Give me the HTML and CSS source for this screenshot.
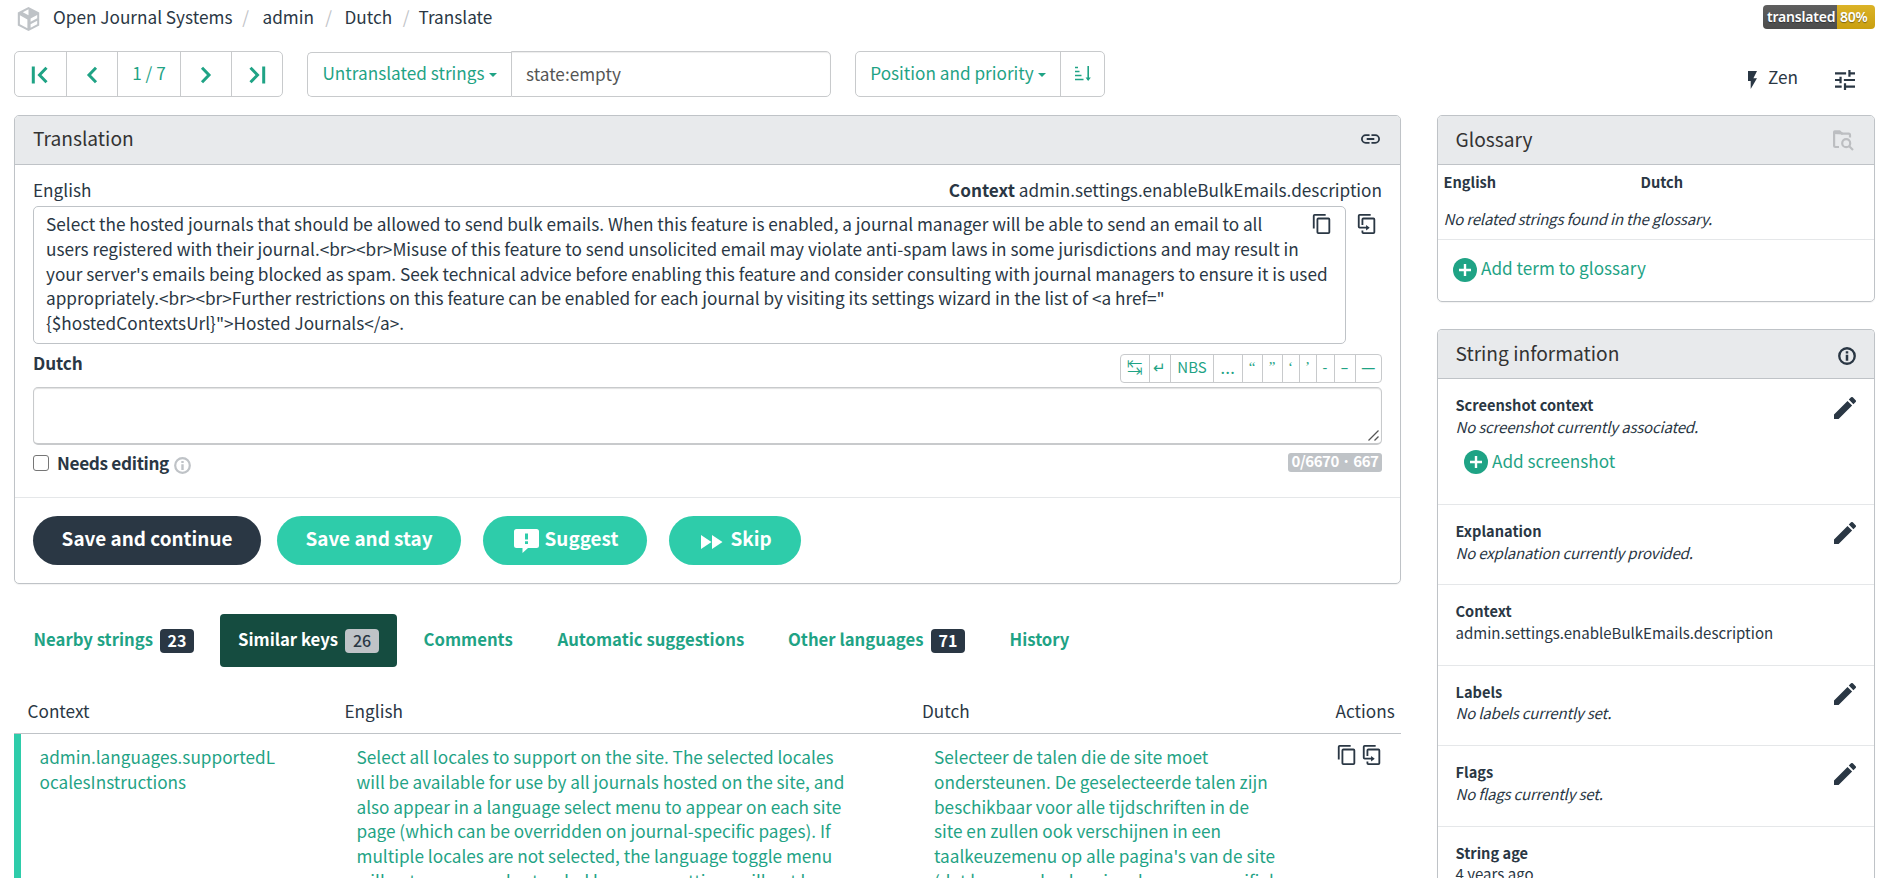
FILE: index.html
```
<!DOCTYPE html>
<html lang="en">
<head>
<meta charset="utf-8">
<title>Open Journal Systems — Dutch — Translate</title>
<link rel="stylesheet" href="styles.css">
</head>
<body>
<svg class="defs" aria-hidden="true">
  <symbol id="copy" viewBox="0 0 24 24"><path d="M19 21H8V7h11m0-2H8a2 2 0 0 0-2 2v14a2 2 0 0 0 2 2h11a2 2 0 0 0 2-2V7a2 2 0 0 0-2-2m-3-4H4a2 2 0 0 0-2 2v14h2V3h12V1z"/></symbol>
  <symbol id="clone" viewBox="0 0 24 24"><path d="M11 17H4a2 2 0 0 1-2-2V3a2 2 0 0 1 2-2h12v2H4v12h7v-2l4 3-4 3v-2m8 4V7H8v6H6V7a2 2 0 0 1 2-2h11a2 2 0 0 1 2 2v14a2 2 0 0 1-2 2H8a2 2 0 0 1-2-2v-2h2v2h11z"/></symbol>
  <symbol id="pencil" viewBox="3 3 18 18"><path d="M20.71 7.04a1 1 0 0 0 0-1.41l-2.34-2.34a1 1 0 0 0-1.41 0l-1.84 1.83 3.75 3.75M3 17.25V21h3.75L17.81 9.93l-3.75-3.75z"/></symbol>
  <symbol id="info" viewBox="0 0 20 20"><circle cx="10" cy="10" r="8.6" fill="none" stroke="currentColor" stroke-width="2.6"/><path d="M8.6 4.800h2.800v2.400H8.600zM8.600 8.600h2.800v6.600H8.600z"/></symbol>
  <symbol id="plus" viewBox="0 0 24 24"><circle cx="12" cy="12" r="12"/><path d="M12 6v12M6 12h12" stroke="#fff" stroke-width="2.4"/></symbol>
</svg>

<header class="top">
  <nav class="crumbs">
    <svg class="logo" viewBox="0 0 25 24"><path d="M12.500 0L23.200 5.400 23.200 18.400 12.500 24 1.800 18.400 1.800 5.400zM12.500 2.300L6.800 5.300 12.500 8.300zM3.900 8.300V17.200L11.400 21.200V12.400zM21.200 8.100L14.600 11.600V14.700L21.200 11.300zM21.200 13.800L14.600 17.200V20.700L21.200 17.200z" fill-rule="evenodd"/></svg>
    <a class="c1">Open Journal Systems</a><span class="sep">/</span>
    <a class="c2">admin</a><span class="sep">/</span>
    <a class="c3">Dutch</a><span class="sep">/</span>
    <a class="c4">Translate</a>
  </nav>
  <div class="status"><span class="status-label">translated</span><span class="status-value">80%</span></div>
</header>

<div class="toolbar">
  <div class="group pager">
    <a><svg width="18" height="18" viewBox="0 0 18 18" class="stroke"><path d="M2.300 .5v17M15.500 1.800L8.500 9l7 7.200"/></svg></a>
    <a><svg width="18" height="18" viewBox="0 0 18 18" class="stroke"><path d="M13 1.800L6 9l7 7.200"/></svg></a>
    <a class="count">1 / 7</a>
    <a><svg width="18" height="18" viewBox="0 0 18 18" class="stroke"><path d="M5 1.800L12 9l-7 7.200"/></svg></a>
    <a><svg width="18" height="18" viewBox="0 0 18 18" class="stroke"><path d="M2.500 1.800L9.500 9l-7 7.200M15.700 .5v17"/></svg></a>
  </div>
  <div class="search">
    <a class="filter">Untranslated strings<i class="caret"></i></a>
    <div class="query">state:empty</div>
  </div>
  <div class="group sort">
    <a class="sortby">Position and priority<i class="caret"></i></a>
    <a class="order"><svg width="16" height="16" viewBox="0 0 16 16"><path d="M0 1.500h3M0 5.500h4.500M0 9.500h6.500M0 13.500h8.500M13.200 0v14" stroke="currentColor" stroke-width="1.600"/><path d="M10.600 11.600h5.200L13.200 15z"/></svg></a>
  </div>
  <a class="zen"><svg width="9" height="18" viewBox="7 2 10 20" preserveAspectRatio="none"><path d="M7 2v11h3v9l7-12h-4l4-8z"/></svg>Zen</a>
  <svg class="tune" width="20" height="20" viewBox="3 3 18 18"><path d="M3 17v2h6v-2H3M3 5v2h10V5H3m10 16v-2h8v-2h-8v-2h-2v6h2M7 9v2H3v2h4v2h2V9H7m14 4v-2H11v2h10m-6-4h2V7h4V5h-4V3h-2v6z"/></svg>
</div>

<div class="columns">
  <main>
    <section class="card translation">
      <div class="card-head"><h4>Translation</h4>
        <svg class="link" width="19" height="10" viewBox="2 7 20 10"><path d="M3.900 12A3.100 3.100 0 0 1 7 8.900h4V7H7a5 5 0 0 0 0 10h4v-1.900H7A3.100 3.100 0 0 1 3.900 12M8 13h8v-2H8v2m9-6h-4v1.900h4a3.100 3.100 0 0 1 0 6.200h-4V17h4a5 5 0 0 0 0-10z"/></svg></div>
      <div class="card-body">
        <div class="labels"><span>English</span><span><b>Context</b> admin.settings.enableBulkEmails.description</span></div>
        <div class="source-row">
          <div class="source">
            <div>Select the hosted journals that should be allowed to send bulk emails. When this feature is enabled, a journal manager will be able to send an email to all<br>users registered with their journal.&lt;br&gt;&lt;br&gt;Misuse of this feature to send unsolicited email may violate anti-spam laws in some jurisdictions and may result in<br>your server's emails being blocked as spam. Seek technical advice before enabling this feature and consider consulting with journal managers to ensure it is used<br>appropriately.&lt;br&gt;&lt;br&gt;Further restrictions on this feature can be enabled for each journal by visiting its settings wizard in the list of &lt;a href="<br>{$hostedContextsUrl}"&gt;Hosted Journals&lt;/a&gt;.</div>
            <svg class="ico copy-in"><use href="#copy"/></svg>
          </div>
          <svg class="ico clone-out"><use href="#clone"/></svg>
        </div>
        <div class="target-row">
          <b>Dutch</b>
          <div class="chars">
            <a class="k1">↹</a><a class="k2">↵</a><a class="k3">NBS</a><a class="k4">…</a><a class="k5">“</a><a class="k6">”</a><a class="k7">‘</a><a class="k8">’</a><a class="k9">-</a><a class="k10">–</a><a class="k11">—</a>
          </div>
        </div>
        <div class="editor"><svg width="11" height="11" viewBox="0 0 11 11"><path d="M.5 10.500l10-10M6.500 10.500l4-4" stroke="#555" stroke-width="1.300"/></svg></div>
        <div class="flags-row">
          <span class="checkbox"></span><b>Needs editing</b>
          <svg class="hint"><use href="#info"/></svg>
          <span class="counter">0/6670 · 667</span>
        </div>
      </div>
      <div class="card-foot">
        <a class="btn dark b1">Save and continue</a>
        <a class="btn b2">Save and stay</a>
        <a class="btn b3"><svg width="25" height="24" viewBox="0 0 25 24"><path fill-rule="evenodd" d="M2.500 0h20A2.500 2.500 0 0 1 25 2.500v14a2.500 2.500 0 0 1-2.500 2.500H14l-5.500 5V19h-6A2.500 2.500 0 0 1 0 16.500v-14A2.500 2.500 0 0 1 2.500 0zM11 4.500h3v6h-3zM11 12.300h3v2.700h-3z"/></svg><span>Suggest</span></a>
        <a class="btn b4"><svg width="22" height="14" viewBox="0 0 22 14"><path d="M0 0l10.500 7L0 14zM11 0l10.500 7L11 14z"/></svg><span>Skip</span></a>
      </div>
    </section>

    <nav class="tabs">
      <a class="t1">Nearby strings<em>23</em></a>
      <a class="t2 active">Similar keys<em>26</em></a>
      <a class="t3">Comments</a>
      <a class="t4">Automatic suggestions</a>
      <a class="t5">Other languages<em>71</em></a>
      <a class="t6">History</a>
    </nav>

    <div class="table">
      <div class="tr th"><span>Context</span><span>English</span><span>Dutch</span><span>Actions</span></div>
      <div class="tr td">
        <div>admin.languages.supportedL<br>ocalesInstructions</div>
        <div>Select all locales to support on the site. The selected locales<br>will be available for use by all journals hosted on the site, and<br>also appear in a language select menu to appear on each site<br>page (which can be overridden on journal-specific pages). If<br>multiple locales are not selected, the language toggle menu<br>will not appear and extended language settings will not be</div>
        <div>Selecteer de talen die de site moet<br>ondersteunen. De geselecteerde talen zijn<br>beschikbaar voor alle tijdschriften in de<br>site en zullen ook verschijnen in een<br>taalkeuzemenu op alle pagina's van de site<br>(dat kan worden herzien door een specifiek</div>
        <div class="acts"><svg class="ico"><use href="#copy"/></svg><svg class="ico"><use href="#clone"/></svg></div>
      </div>
    </div>
  </main>

  <aside>
    <section class="card glossary">
      <div class="card-head"><h4>Glossary</h4>
        <svg class="folder" viewBox="0 0 21 21"><path d="M6 17H2.500a1.400 1.400 0 0 1-1.400-1.400V2M17 7.500V5a1.400 1.400 0 0 0-1.400-1.400H8"/><path d="M0 4V2A1.800 1.800 0 0 1 1.800.2H7l2.300 2.300H10V4.600z" fill="#bcbec1" stroke="none"/><circle cx="13.200" cy="13.200" r="4"/><path d="M16 16l4 4"/></svg></div>
      <div class="gl-head"><b>English</b><b>Dutch</b></div>
      <div class="gl-empty"><i>No related strings found in the glossary.</i></div>
      <div class="gl-foot"><a class="add"><svg><use href="#plus"/></svg>Add term to glossary</a></div>
    </section>

    <section class="card info">
      <div class="card-head"><h4>String information</h4><svg class="info-ico"><use href="#info"/></svg></div>
      <div class="item shot"><div><b>Screenshot context</b><i>No screenshot currently associated.</i><a class="add"><svg><use href="#plus"/></svg>Add screenshot</a></div><svg class="pen"><use href="#pencil"/></svg></div>
      <div class="item"><div><b>Explanation</b><i>No explanation currently provided.</i></div><svg class="pen"><use href="#pencil"/></svg></div>
      <div class="item"><div><b>Context</b><span>admin.settings.enableBulkEmails.description</span></div></div>
      <div class="item"><div><b>Labels</b><i>No labels currently set.</i></div><svg class="pen"><use href="#pencil"/></svg></div>
      <div class="item"><div><b>Flags</b><i>No flags currently set.</i></div><svg class="pen"><use href="#pencil"/></svg></div>
      <div class="item"><div><b>String age</b><span>4 years ago</span></div></div>
    </section>
  </aside>
</div>
</body>
</html>
```
FILE: styles.css
```
* { box-sizing: border-box; }
html, body { height: 878px; overflow: hidden; }
body {
  margin: 0;
  padding: 0 11px 0 14px;
  background: #fff;
  color: #2a3744;
  font: 17.19px/24.75px "Noto Sans CJK JP", "Noto Sans", sans-serif;
}
svg { display: block; flex: none; fill: currentColor; }
b { font-weight: bold; }
.defs { position: absolute; width: 0; height: 0; }
.stroke { fill: none; stroke: currentColor; stroke-width: 3; }
.ico { width: 22px; height: 22px; }

/* header */
.top { display: flex; justify-content: space-between; height: 51px; }
.crumbs { display: flex; padding: 5px 0 0 2px; }
.logo { width: 25px; height: 24px; margin: 2px 12px 0 0; color: #bfc3c7; }
.sep { color: #bfc3c7; width: 9px; text-align: center; }
.c1 { width: 188px; }
.c2 { padding-left: 12.500px; width: 74px; }
.c3 { padding-left: 11.500px; width: 68.500px; }
.c4 { padding-left: 8px; }
.status {
  display: flex; height: 24px; margin-top: 5px; border-radius: 4px; overflow: hidden;
  color: #fff; font: 600 14px/23px "Noto Sans", sans-serif;
  text-shadow: 0 1px 1px rgba(0, 0, 0, .4);
}
.status-label { width: 74px; padding-left: 4px; background: linear-gradient(#5f5f5f, #4c4c4c); letter-spacing: -0.2px; }
.status-value { width: 38px; padding-left: 3px; background: linear-gradient(#dcb327, #c99f10); letter-spacing: -0.3px; }

/* toolbar */
.toolbar { display: flex; height: 64px; }
.toolbar a { display: flex; align-items: center; justify-content: center; }
.group { display: flex; height: 46px; border: 1px solid #c8cacc; border-radius: 5px; color: #1fa385; }
.group a { padding-bottom: 1px; }
.group a + a { border-left: 1px solid #c8cacc; }
.pager { width: 269px; margin-right: 24px; }
.pager a { width: 51px; padding: 0; }
.pager a:first-child { padding-right: 2px; }
.pager svg { margin-top: 1px; }
.pager a.count { width: 63px; padding-bottom: 1px; }
.search { display: flex; margin-right: 24px; }
.search .filter {
  width: 204px; height: 45px; margin-top: 1px; padding-bottom: 2px; color: #1fa385;
  border: 1px solid #c8cacc; border-right: 0; border-radius: 5px 0 0 5px;
}
.query {
  width: 320px; height: 46px; padding: 10px 0 0 14px; color: #555;
  border: 1px solid #c8cacc; border-radius: 0 5px 5px 0;
  box-shadow: inset 0 1px 1px rgba(0, 0, 0, .075);
}
.caret { margin: 2px 0 0 4px; border: 4px solid transparent; border-top-color: currentColor; border-bottom: 0; }
.sort { width: 250px; }
.sort .sortby { width: 204px; }
.sort .order { flex: 1; padding: 0; }
.zen { margin-left: 643px; height: 53px; gap: 11px; }
.zen svg { margin-top: 4px; }
.tune { margin: 18.500px 0 0 37px; }

/* cards */
.columns { display: flex; gap: 36px; }
main { width: 1387px; }
aside { width: 438px; }
.card { border: 1px solid #bfc3c7; border-radius: 5px; box-shadow: 0 1px 1px rgba(0, 0, 0, .05); overflow: hidden; }
.card-head {
  display: flex; align-items: center; justify-content: space-between;
  height: 49px; background: #e8eaec; border-bottom: 1px solid #bfc3c7;
}
h4 { margin: 0; padding-bottom: 3px; color: #333; font-weight: normal; font-size: 19.2px; }
.translation { height: 469px; }
.translation .card-head { padding: 0 20px 0 18px; }
.link { margin-bottom: 2px; }
.card-body { height: 333px; padding: 13px 18px 0; border-bottom: 1px solid #e5e7e9; }
.labels { display: flex; justify-content: space-between; height: 28px; }
.source-row { display: flex; }
.source {
  display: flex; justify-content: space-between; width: 1313px; height: 138px; padding: 5px 13px 0 12px;
  border: 1px solid #bfc3c7; border-radius: 5px; white-space: nowrap;
}
.source > div { width: 1265px; }
.copy-in { margin: 1px 0 0; }
.clone-out { margin: 7px 0 0 10px; }
.target-row { display: flex; justify-content: space-between; height: 43px; padding-top: 7px; }
.target-row b { letter-spacing: -0.1px; }
.chars {
  display: flex; width: 262px; height: 29px; margin-top: 3px; color: #1fa385;
  border: 1px solid #c8cacc; border-radius: 4px; font-size: 15px; line-height: 24px;
}
.chars a { text-align: center; overflow: hidden; }
.chars a + a { border-left: 1px solid #c8cacc; }
.k1 { width: 27.500px; } .k2 { width: 21.500px; } .k3 { width: 43px; } .k4 { width: 28.500px; }
.k5 { width: 20px; } .k6 { width: 20px; } .k7 { width: 17px; } .k8 { width: 17px; }
.k9 { width: 18px; } .k10 { width: 21px; } .k11 { flex: 1; }
.k4 { font-family: "Open Sans", sans-serif; font-size: 19px; line-height: 24px; }
.k5, .k6, .k7, .k8 { font-family: "Liberation Serif", serif; line-height: 25px; }
.k9, .k10, .k11 { font-family: "Open Sans", sans-serif; line-height: 25px; }
.k11 { font-size: 14px; }
.editor {
  display: flex; align-items: flex-end; justify-content: flex-end; height: 58px; padding: 0 2px 2px 0;
  border: 1px solid #c8cacc; border-bottom-width: 2px; border-radius: 5px;
  box-shadow: inset 0 1px 1px rgba(0, 0, 0, .12);
}
.flags-row { display: flex; padding-top: 5px; }
.checkbox { width: 16px; height: 16px; margin: 5px 8px 0 0; border: 1px solid #767676; border-radius: 3px; }
.flags-row b { width: 117px; margin-top: 1px; letter-spacing: -0.33px; white-space: nowrap; }
.hint { width: 17px; height: 17px; margin-top: 7px; color: #bfc3c7; }
.counter {
  width: 94px; height: 19px; margin: 3px 0 0 auto; border-radius: 3px; background: #bfc3c7; color: #fff;
  font-size: 15px; font-weight: bold; line-height: 16px; letter-spacing: -0.45px; text-align: center; white-space: nowrap;
}
.card-foot { display: flex; padding: 18px 18px 0; }
.btn {
  display: flex; align-items: center; justify-content: center; height: 49px; padding-bottom: 4px;
  border-radius: 24.500px; background: #2eccaa; color: #fff; font-size: 18.900px; font-weight: bold; white-space: nowrap;
}
.dark { background: #2a3744; }
.b1 { width: 228px; }
.b2 { width: 184px; margin-left: 16px; }
.b3 { width: 164px; margin-left: 22px; padding-left: 2px; gap: 6px; }
.b4 { width: 132px; margin-left: 22px; padding-left: 3px; gap: 7px; }
.b3 svg { margin-top: 5px; }
.b4 svg { margin-top: 6px; }

/* tabs */
.tabs { display: flex; gap: 8px; height: 53px; margin: 30px 0 0 1.500px; }
.tabs a {
  display: flex; align-items: center; height: 53px; padding: 0 0 3px 18px; color: #1fa385;
  font-weight: bold; font-size: 16.730px; border-radius: 4px; white-space: nowrap;
}
.tabs em {
  width: 34px; height: 24px; margin: 4px 18px 0 auto; border-radius: 4px; background: #2a3744; color: #fff;
  font-style: normal; font-size: 16px; line-height: 23px; text-align: center;
}
.tabs .active { background: #154c40; color: #fff; }
.active em { background: #bfc3c7; color: #2a3744; font-weight: 500; }
.t1 { width: 196.500px; } .t2 { width: 177px; } .t3 { width: 126px; }
.t4 { width: 223px; } .t5 { width: 213px; } .t6 { width: 97px; }
.t3, .t4, .t6 { text-indent: .5px; }

/* table */
.table { margin-top: 31.500px; white-space: nowrap; }
.tr { display: grid; grid-template-columns: 317px 577.500px 413.500px 79px; }
.th { height: 35.500px; border-bottom: 1px solid #bfc3c7; }
.th span { padding-left: 13.500px; }
.td { height: 144px; padding-top: 11px; overflow: hidden; color: #1fa385; box-shadow: inset 7px 0 #2eccaa; }
.td div { padding-left: 25.500px; }
.td .acts { display: flex; gap: 3px; margin-top: -1px; padding-left: 14px; color: #2a3744; }

/* sidebar */
aside { font-size: 15.040px; line-height: 22px; }
aside b { font-size: 14.620px; }
aside i { letter-spacing: -0.2px; }
aside .card-head { padding: 0 20px 0 17.500px; }
.folder { width: 21px; height: 21px; fill: none; stroke: #bcbec1; stroke-width: 2.200; }
.glossary { height: 187px; }
.gl-head { display: flex; padding: 6px 5.500px 0; }
.gl-head b { width: 197px; }
.gl-empty { height: 46.500px; padding: 15px 5.500px 0; border-bottom: 1px solid #e5e7e9; }
.add { display: flex; align-items: center; gap: 4px; color: #1fa385; font-size: 17.170px; line-height: 24px; }
.add svg { width: 24px; height: 24px; margin-top: 3px; }
.gl-foot { padding: 15px 0 0 15px; }
.info { height: 549px; margin-top: 27px; border-bottom: 0; border-radius: 5px 5px 0 0; }
.info-ico { width: 18px; height: 18px; margin: 3px -2px 0 0; }
.item { display: flex; justify-content: space-between; height: 80.400px; padding: 15px 18px 0 17.500px; border-bottom: 1px solid #e5e7e9; }
.item b, .item i, .item span { display: block; line-height: 21.500px; }
.item.shot { height: 126px; }
.shot .add { margin: 10px 0 0 8.500px; }
.pen { width: 22px; height: 22px; margin-top: 2px; }
.shot .pen { margin-top: 3px; }
```
